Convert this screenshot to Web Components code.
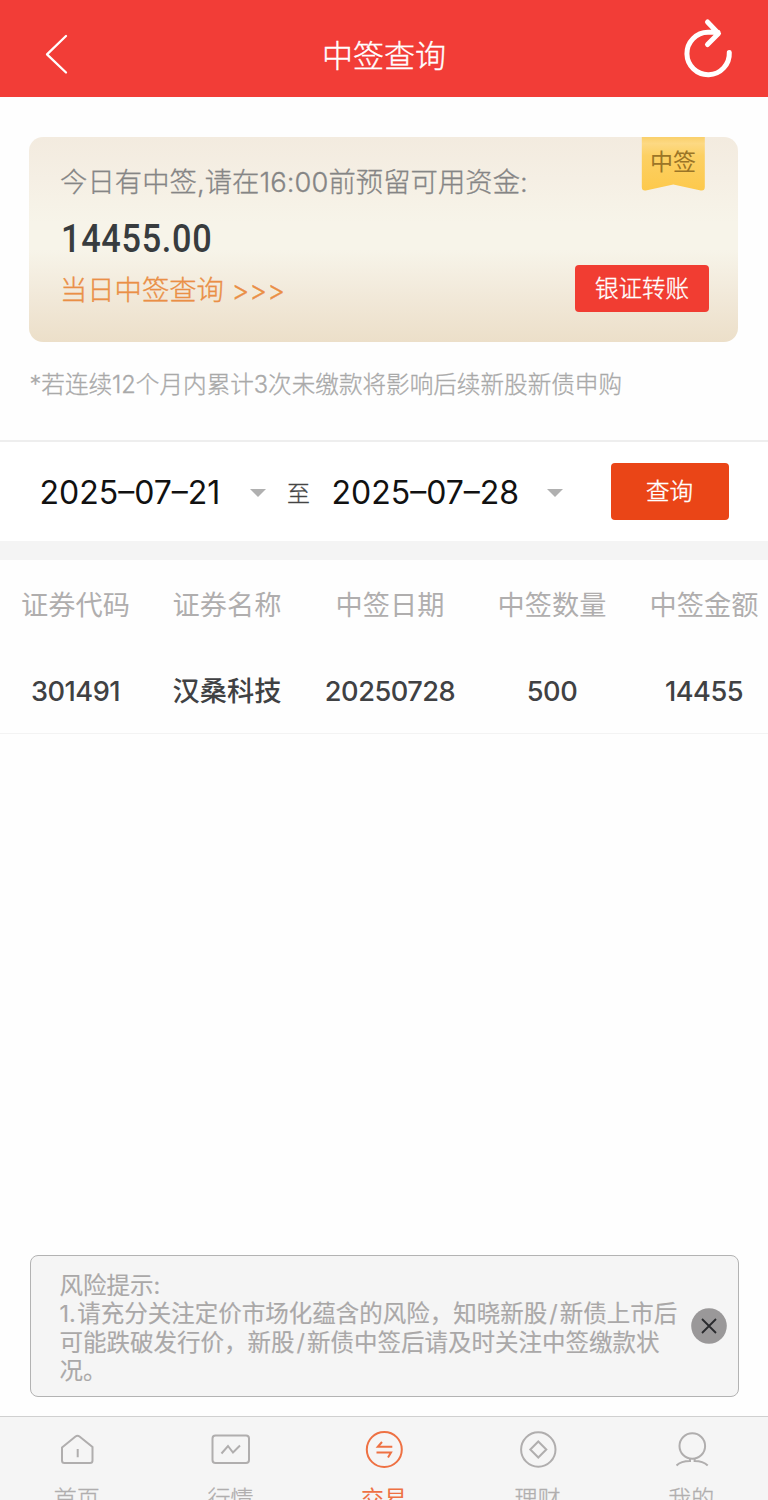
<!DOCTYPE html>
<html lang="zh-CN">
<head>
<meta charset="utf-8">
<title>中签查询</title>
<style>
html, body { margin: 0; padding: 0; }
body {
  width: 768px;
  height: 1500px;
  overflow: hidden;
  background: #fefefe;
  font-family: Inter, "Noto Sans CJK SC", sans-serif;
}
</style>
</head>
<body>
<lottery-app></lottery-app>

<script>
function define(name, html, setup) {
  const template = document.createElement("template")
  template.innerHTML = html
  customElements.define(name, class extends HTMLElement {
    constructor() {
      super()
      this.attachShadow({ mode: "open" })
      this.shadowRoot.append(template.content.cloneNode(true))
    }
    connectedCallback() {
      if (setup) setup(this, this.shadowRoot)
    }
  })
}

define("title-bar", /*html*/`
<style>
:host {
  display: flex;
  justify-content: space-between;
  align-items: flex-start;
  box-sizing: border-box;
  height: 97px;
  background: #f23d37;
  color: #fff;
}
svg { display: block; fill: none; stroke: #fff; stroke-linecap: round; stroke-linejoin: round; width: 108px; height: 97px; }
h1 { margin: 0; font-size: 31px; line-height: 46px; font-weight: 300; padding-top: 33px; -webkit-text-stroke: 0.35px; }
</style>
<svg id="back" viewBox="0 0 108 97" stroke-width="2.3"><path d="M66 36 47 54.3 66 72.5"/></svg>
<h1><slot></slot></h1>
<svg id="reload" viewBox="0 0 108 97" stroke-width="5"><path d="M69.3 52.5A21.2 21.2 0 1 1 48 32.3H58M47.5 22 58.5 33.5 47.5 44.5"/></svg>
`)

define("fund-card", /*html*/`
<style>
:host {
  display: block;
  position: relative;
  box-sizing: border-box;
  height: 204.5px;
  margin: 40px 30px 0 29px;
  padding: 27px 30px 0 31px;
  border-radius: 14px;
  background: linear-gradient(#f3ebdf 0%, #f5efe4 20%, #f7f4e9 42%, #f7f4e9 55%, #f2eadb 75%, #ecdfc9 100%);
}
p { margin: 0; font-size: 27.3px; line-height: 38px; font-weight: 300; color: #858585; white-space: nowrap; letter-spacing: 0.08px; -webkit-text-stroke: 0.3px; }
.sum { margin: 15px 0 0 1px; font: 500 39.5px/44px Roboto, sans-serif; letter-spacing: 0.8px; color: #383c3e; transform: scaleX(.867); transform-origin: 0 0; }
.row { display: flex; justify-content: space-between; align-items: flex-start; margin-top: 3px; }
a { font-size: 27.3px; line-height: 54px; font-weight: 300; color: #ea8f46; white-space: nowrap; -webkit-text-stroke: 0.35px; }
button {
  width: 134px; height: 47px; margin: 1px -1px 0 0; padding: 0; border: 0; border-radius: 4px;
  background: #f13d32; color: #fff; font: 300 23.5px/47px Inter, "Noto Sans CJK SC", sans-serif; -webkit-text-stroke: 0.35px;
}
.badge { position: absolute; right: 33px; top: 0; width: 64px; height: 54px; }
.badge svg { position: absolute; inset: 0; }
.badge span { position: relative; display: block; text-align: center; font-size: 23px; line-height: 51px; color: #9b7527; }
</style>
<p>今日有中签,请在16:00前预留可用资金:</p>
<div class="sum">14455.00</div>
<div class="row"><a>当日中签查询 &gt;&gt;&gt;</a><button>银证转账</button></div>
<div class="badge">
  <svg width="64" height="54" viewBox="0 0 64 54">
    <defs><linearGradient id="g" x2="0" y2="1"><stop stop-color="#fad06b"/><stop offset=".12" stop-color="#fdd983"/><stop offset=".35" stop-color="#fcd063"/><stop offset="1" stop-color="#fdc94c"/></linearGradient></defs>
    <path fill="url(#g)" d="M.8 0h63v50q0 4-4 3.5L32.300 47.500 4.800 53.500Q.8 54 .8 50z"/>
  </svg>
  <span>中签</span>
</div>
`)

define("hint-line", /*html*/`
<style>
:host { display: block; height: 100.5px; box-sizing: border-box; padding: 25px 0 0 29.5px; border-bottom: 2px solid #eee;
  font-size: 23.6px; line-height: 36px; font-weight: 300; color: #a9a9a9; white-space: nowrap; -webkit-text-stroke: 0.3px; }
</style>
<slot></slot>
`)

define("date-field", /*html*/`
<style>
:host { display: flex; align-items: center; justify-content: space-between; font-size: 32px; line-height: 40px; font-weight: 400; color: #111; white-space: nowrap; }
i { width: 0; height: 0; border: 8px solid transparent; border-top-color: #b0b0b0; border-bottom: 0; }
</style>
<span><slot></slot></span><i></i>
`)

define("date-filter", /*html*/`
<style>
:host { display: flex; align-items: center; height: 99px; padding: 0 39.500px; background: #fff; border-bottom: 19.5px solid #f4f4f4; }
date-field { padding-top: 3px; }
date-field:first-of-type { width: 226px; }
date-field:last-of-type { width: 231.5px; }
.to { width: 66px; text-align: center; font-size: 23px; font-weight: 300; color: #444; -webkit-text-stroke: 0.3px; }
button { width: 118px; height: 57px; margin: 0 0 0 auto; padding: 0; border: 0; border-radius: 4px; background: #ea4517; color: #fff;
  font: 300 23.5px/57px Inter, "Noto Sans CJK SC", sans-serif; -webkit-text-stroke: 0.4px; }
</style>
<date-field>2025–07–21</date-field>
<span class="to">至</span>
<date-field>2025–07–28</date-field>
<button>查询</button>
`)

define("result-row", /*html*/`
<style>
:host { display: grid; grid-template-columns: 151px 152px 174px 150px 141px; height: 84px; line-height: 86px; border-bottom: 1px solid #f3f3f3;
  font-size: 27.2px; font-weight: 500; color: #404143; }
:host([head]) { height: 89px; line-height: 92px; border: 0; font-weight: 400; color: #b0aeae; }
span { text-align: center; white-space: nowrap; }
span:last-child { padding-left: 13px; }
.num { letter-spacing: -0.5px; }
</style>
`, (el, root) => {
  el.getAttribute("cells").split(",").forEach(text => {
    const cell = document.createElement("span")
    cell.textContent = text
    if (!isNaN(text)) cell.className = "num"
    root.append(cell)
  })
})

define("risk-notice", /*html*/`
<style>
:host { display: flex; align-items: center; box-sizing: border-box; height: 142px; margin: auto 29.5px 19px 29.5px; padding-left: 29px;
  border: 1.5px solid #b3b3b3; border-radius: 8px; background: #f5f5f5; }
div { width: 631px; padding-top: 5px; font-size: 23.5px; line-height: 28.300px; color: #aaa8a8; white-space: nowrap; -webkit-text-stroke: 0.15px; }
::slotted(b) { font-weight: 400; padding: 0 2px; }
::slotted(b:first-of-type) { padding: 0 1.5px 0 0; }
svg { display: block; width: 36px; height: 36px; }
</style>
<div><slot></slot></div>
<svg viewBox="0 0 36 36"><circle cx="18" cy="18" r="17.800" fill="#9a9899"/><path d="M11 11 25 25M25 11 11 25" stroke="#292a2d" stroke-width="1.8"/></svg>
`)

const icons = {
  home: '<path d="M5 18.500 18.500 7.500Q20.500 6 22.500 7.500L35.500 18V31.500Q35.500 34 33 34H7.500Q5 34 5 31.500ZM20.700 20V28.300"/>',
  quote: '<rect x="2.500" y="6.500" width="36.500" height="27.500" rx="3"/><path d="M11.500 24.500 18 17 23 23.500 30 16.500"/>',
  trade: '<circle cx="20.300" cy="20.500" r="17.500"/><path d="M28.300 17.800H13.800L18 13M12.500 23.500H27L24 28.500"/>',
  money: '<circle cx="20.300" cy="20.500" r="17.200"/><path d="M20.300 12.500 28.300 20.500 20.300 28.500 12.300 20.500Z"/>',
  mine: '<circle cx="21.300" cy="17" r="12.800"/><path d="M19 29.500V32Q10 32 5.500 36.500M23.600 29.500V32Q32 32 36.700 36.500"/>'
}

define("tab-item", /*html*/`
<style>
:host { flex: 1; display: flex; flex-direction: column; align-items: center; color: #b0aeae; font-size: 23px; line-height: 34px; font-weight: 300; -webkit-text-stroke: 0.3px; }
:host([active]) { color: #ee7143; font-weight: 400; -webkit-text-stroke: 0; }
svg { flex: none; width: 40px; height: 40px; margin: 12px 0 13px; fill: none; stroke: currentColor; stroke-width: 2; }
slot { display: block; flex: none; }
</style>
<svg viewBox="0 0 40 40"></svg>
<slot></slot>
`, (el, root) => {
  root.querySelector("svg").innerHTML = icons[el.getAttribute("icon")]
})

define("tab-bar", /*html*/`
<style>
:host { display: flex; box-sizing: border-box; height: 84px; border-top: 1px solid #d0d0d0; background: #f5f5f5; overflow: hidden; }
</style>
<slot></slot>
`)

define("lottery-app", /*html*/`
<style>
:host { display: flex; flex-direction: column; width: 768px; height: 1500px; overflow: hidden; }
:host > * { flex-shrink: 0; }
</style>
<title-bar>中签查询</title-bar>
<fund-card></fund-card>
<hint-line>*若连续12个月内累计3次未缴款将影响后续新股新债申购</hint-line>
<date-filter></date-filter>
<result-row head cells="证券代码,证券名称,中签日期,中签数量,中签金额"></result-row>
<result-row cells="301491,汉桑科技,20250728,500,14455"></result-row>
<risk-notice>风险提示:<br><b>1.</b>请充分关注定价市场化蕴含的风险，知晓新股<b>/</b>新债上市后<br>可能跌破发行价，新股<b>/</b>新债中签后请及时关注中签缴款状<br>况。</risk-notice>
<tab-bar>
  <tab-item icon="home">首页</tab-item>
  <tab-item icon="quote">行情</tab-item>
  <tab-item icon="trade" active>交易</tab-item>
  <tab-item icon="money">理财</tab-item>
  <tab-item icon="mine">我的</tab-item>
</tab-bar>
`)
</script>
</body>
</html>
